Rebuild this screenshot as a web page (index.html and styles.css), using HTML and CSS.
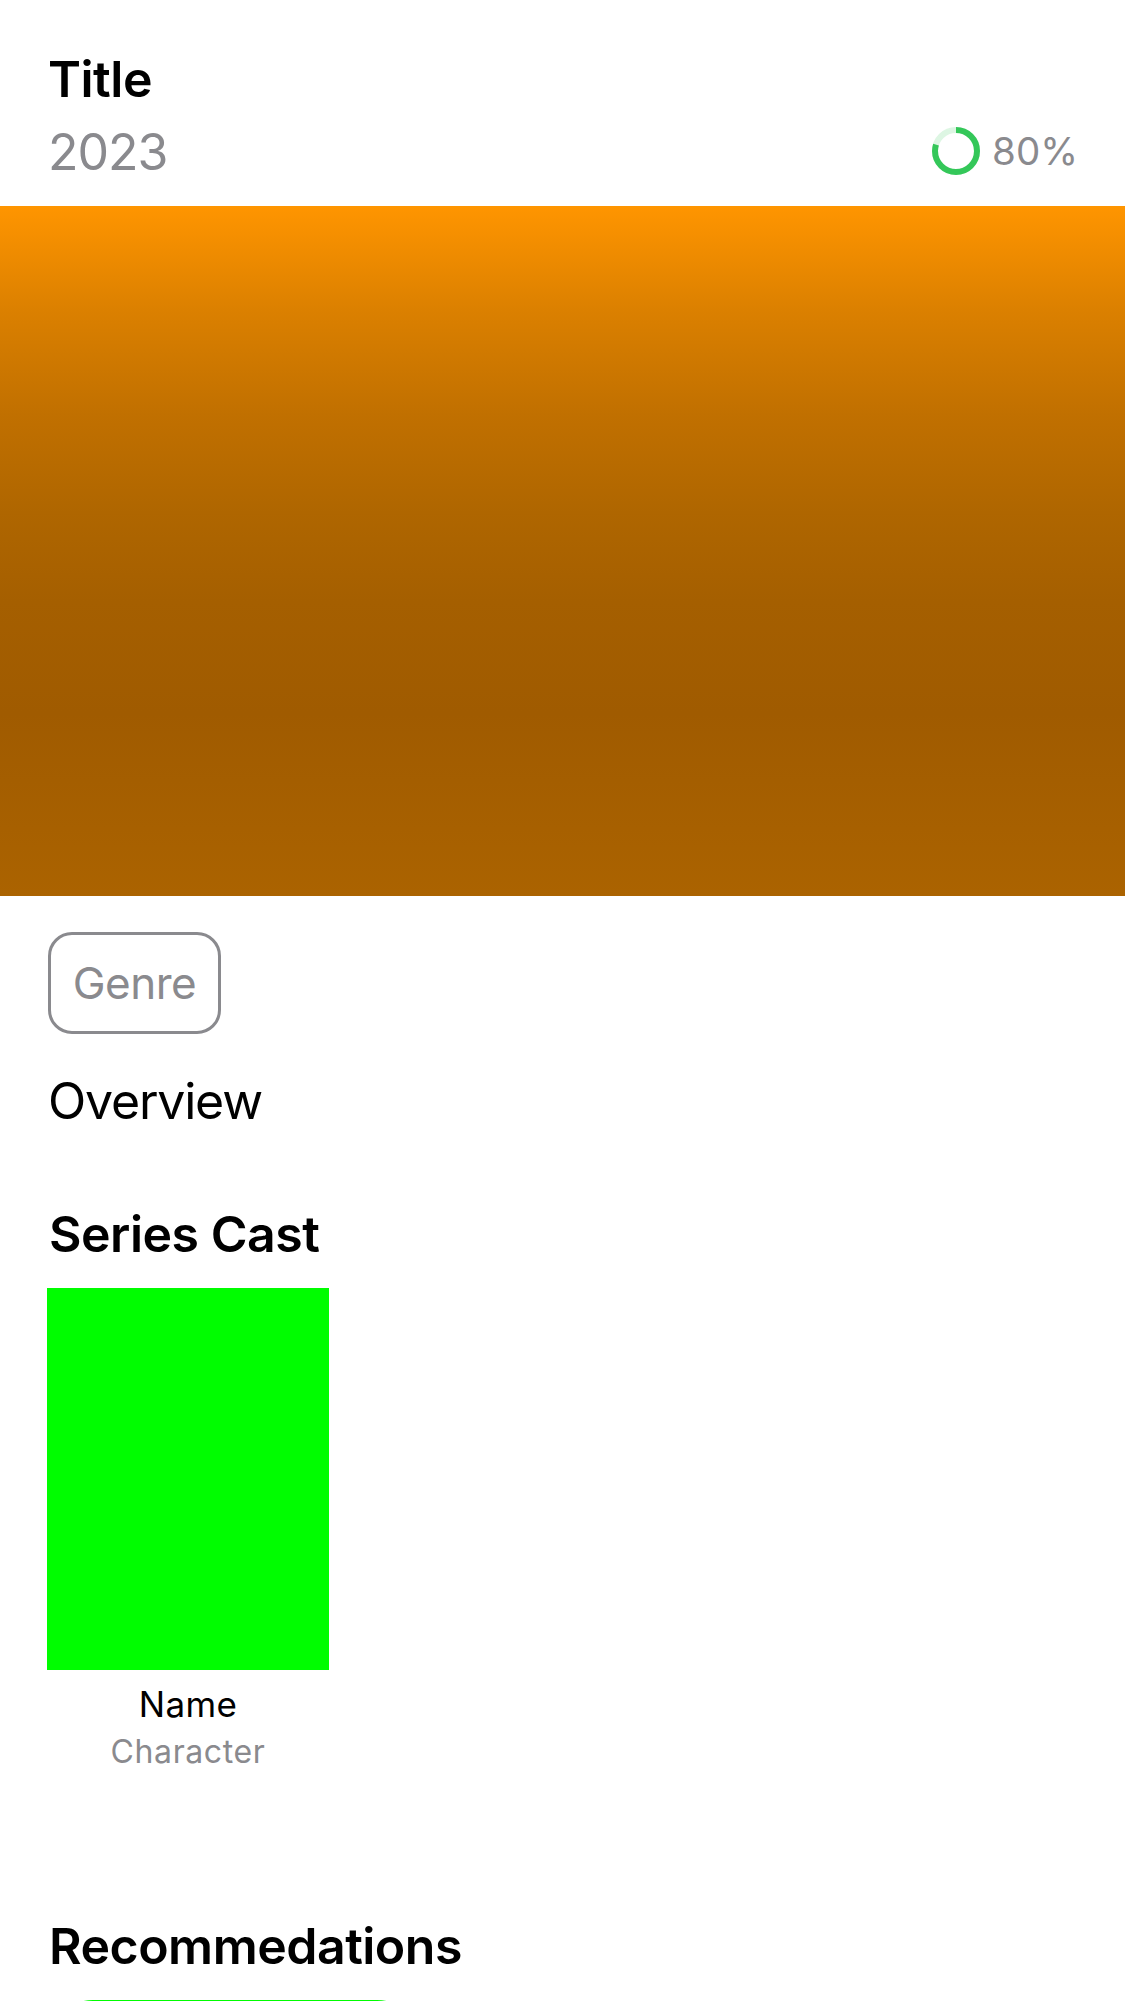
FILE: index.html
```html
<!DOCTYPE html>
<html lang="en">
<head>
<meta charset="utf-8">
<title>Title</title>
<link rel="stylesheet" href="styles.css">
</head>
<body>
<main class="screen">
  <header class="header">
    <h1 class="heading title">Title</h1>
    <div class="meta">
      <span class="year">2023</span>
      <div class="score">
        <svg class="ring" viewBox="0 0 48 48" fill="none" stroke="#34c759" stroke-width="6">
          <circle cx="24" cy="24" r="21" stroke-opacity=".17"/>
          <circle cx="24" cy="24" r="21" pathLength="100" stroke-dasharray="80 20" transform="rotate(-90 24 24)"/>
        </svg>
        <span class="percent">80%</span>
      </div>
    </div>
  </header>
  <div class="backdrop"></div>
  <section class="details">
    <span class="genre">Genre</span>
    <p class="overview">Overview</p>
  </section>
  <section class="cast">
    <h2 class="heading cast-heading">Series Cast</h2>
    <figure class="member">
      <div class="portrait"></div>
      <figcaption class="caption">
        <span class="name">Name</span>
        <span class="character">Character</span>
      </figcaption>
    </figure>
  </section>
  <section class="recommendations">
    <h2 class="heading rec-heading">Recommedations</h2>
    <div class="poster"></div>
  </section>
</main>
</body>
</html>
```

FILE: styles.css
```css
* { box-sizing: border-box; }
body { margin: 0; background: #fff; }
h1, h2, p, figure { margin: 0; }
.screen {
  height: 2001px;
  overflow: hidden;
  font-family: Inter, "Liberation Sans", sans-serif;
  color: #000;
}
.heading { font-size: 50px; line-height: 60px; font-weight: 600; letter-spacing: -0.5px; }
.header { height: 206px; padding: 49px 47px 0 48px; }
.meta { display: flex; justify-content: space-between; margin-top: 13px; color: #8a8a8e; }
.year { font-size: 50px; line-height: 60px; letter-spacing: -1px; }
.score { display: flex; align-items: center; gap: 12px; height: 60px; }
.ring { width: 48px; height: 48px; margin-top: -2px; }
.percent { font-size: 38.5px; line-height: 46px; margin-top: -2px; }
.backdrop {
  height: 690px;
  background: linear-gradient(#ff9500 0%, #db8000 15.2%, #c17000 30.1%, #af6600 44.4%, #a55f00 57.4%, #a05b00 73.5%, #ab6300 100%);
}
.details { padding: 36px 48px 0; }
.genre {
  display: flex;
  align-items: center;
  justify-content: center;
  width: 173px;
  height: 102px;
  border: 3px solid #8a8a8e;
  border-radius: 24px;
  font-size: 44px;
  letter-spacing: -0.5px;
  color: #8a8a8e;
}
.overview { margin-top: 37px; font-size: 50px; line-height: 60px; letter-spacing: -1.2px; }
.cast { padding: 73px 47px 0; }
.cast-heading { padding-left: 2px; }
.member { width: 282px; margin-top: 24px; }
.portrait { height: 382px; background: #00fd00; }
.caption { display: flex; flex-direction: column; align-items: center; padding-top: 13px; }
.name { font-size: 35px; line-height: 42px; letter-spacing: 0.3px; }
.character { font-size: 32px; line-height: 40px; margin-top: 7px; letter-spacing: 0.6px; color: #8a8a8e; }
.recommendations { padding: 144px 48px 0; }
.rec-heading { padding-left: 1px; }
.poster { width: 374px; height: 560px; margin-top: 24px; border-radius: 45px; background: #00fd00; }
```
